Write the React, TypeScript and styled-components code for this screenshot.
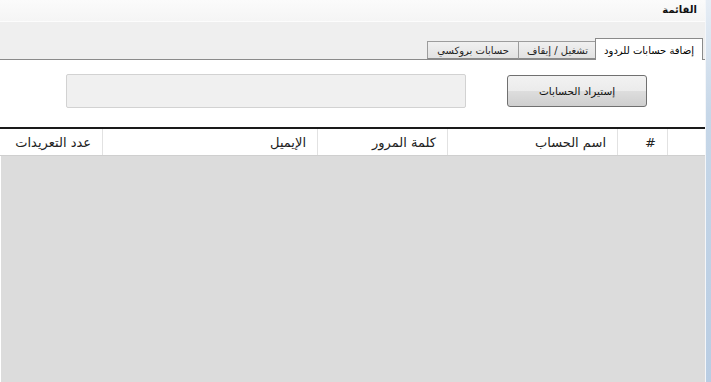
import React from "react";
import styled, { createGlobalStyle } from "styled-components";

const Global = createGlobalStyle`
  html, body { margin: 0; padding: 0; background: #ffffff; overflow: hidden; }
  #root { height: 100vh; }
  * { box-sizing: border-box; }
`;

const Frame = styled.div`
  display: flex;
  height: 100vh;
  font-family: "DejaVu Sans", Tahoma, sans-serif;
  color: #000;
`;

const Main = styled.div`
  width: 705px;
  display: flex;
  flex-direction: column;
  direction: rtl;
`;

const SideStrip = styled.div`
  flex: 1;
  border-left: 1px solid #f4f6f9;
  background: linear-gradient(to bottom, #e6edf5 0%, #c6d7e8 30%, #b9cde3 100%);
`;

const TitleBar = styled.div`
  height: 22px;
  padding: 4px 8px 0 0;
  background: linear-gradient(to bottom, #fbfbfb, #f5f5f5);
  border-bottom: 1px solid #fcfcfc;
  font-size: 10px;
  font-weight: bold;
  color: #111;
`;

const TabStrip = styled.div`
  height: 38px;
  background: #efefef;
  border-bottom: 1px solid #8a8a8a;
  display: flex;
  align-items: flex-end;
  padding-right: 2px;
`;

const Tab = styled.div<{ $active?: boolean; $w: number }>`
  width: ${(p) => p.$w}px;
  height: ${(p) => (p.$active ? 22 : 18)}px;
  margin-bottom: ${(p) => (p.$active ? -1 : 0)}px;
  margin-left: ${(p) => (p.$active ? -1 : 0)}px;
  margin-right: ${(p) => (p.$active ? 0 : -1)}px;
  position: relative;
  z-index: ${(p) => (p.$active ? 2 : 1)};
  display: flex;
  align-items: center;
  justify-content: center;
  font-size: 10px;
  white-space: nowrap;
  color: ${(p) => (p.$active ? "#000" : "#222")};
  background: ${(p) =>
    p.$active ? "#ffffff" : "linear-gradient(to bottom, #f0f0f0, #e2e2e2)"};
  border: 1px solid ${(p) => (p.$active ? "#8a8a8a" : "#9c9c9c")};
  border-bottom: ${(p) => (p.$active ? "none" : "1px solid #8a8a8a")};
  padding-top: 1px;
`;

const Content = styled.div`
  height: 67px;
  background: #fff;
  display: flex;
  align-items: flex-start;
  padding: 14px 58px 0 0;
  gap: 41px;
`;

const ImportButton = styled.button`
  width: 140px;
  height: 32px;
  margin-top: 1px;
  border: 1px solid #707070;
  border-radius: 3px;
  background: linear-gradient(to bottom, #f2f2f2 0%, #ebebeb 50%, #dddddd 51%, #cfcfcf 100%);
  font-family: "DejaVu Sans", Tahoma, sans-serif;
  font-size: 10.5px;
  color: #111;
  direction: rtl;
  padding: 0;
`;

const TextArea = styled.div`
  width: 400px;
  height: 34px;
  background: #f0f0f0;
  border: 1px solid #d2d2d2;
  border-radius: 2px;
`;

const Table = styled.div`
  flex: 1;
  display: flex;
  flex-direction: column;
  border-top: 2px solid #1a1a1a;
`;

const HeaderRow = styled.div`
  height: 27px;
  display: flex;
  background: #ffffff;
  border-bottom: 1px solid #cfcfcf;
`;

const HeaderCell = styled.div<{ $w?: number }>`
  ${(p) => (p.$w ? `width: ${p.$w}px;` : "flex: 1;")}
  border-left: 1px solid #e2e2e2;
  display: flex;
  align-items: center;
  padding: 1px 11px 0 0;
  font-size: 13px;
  color: #222;
  white-space: nowrap;
  &:last-child { border-left: none; }
`;

const Body = styled.div`
  flex: 1;
  background: #dcdcdc;
  margin-left: 1px;
`;

export default function App() {
  return (
    <>
      <Global />
      <Frame>
        <Main>
          <TitleBar>القائمة</TitleBar>
          <TabStrip>
            <Tab $active $w={108}>إضافة حسابات للردود</Tab>
            <Tab $w={79}>تشغيل / إيقاف</Tab>
            <Tab $w={92}>حسابات بروكسي</Tab>
          </TabStrip>
          <Content>
            <ImportButton>إستيراد الحسابات</ImportButton>
            <TextArea />
          </Content>
          <Table>
            <HeaderRow>
              <HeaderCell $w={38} />
              <HeaderCell $w={50}>#</HeaderCell>
              <HeaderCell $w={170}>اسم الحساب</HeaderCell>
              <HeaderCell $w={130}>كلمة المرور</HeaderCell>
              <HeaderCell $w={215}>الإيميل</HeaderCell>
              <HeaderCell>عدد التعريدات</HeaderCell>
            </HeaderRow>
            <Body />
          </Table>
        </Main>
        <SideStrip />
      </Frame>
    </>
  );
}
